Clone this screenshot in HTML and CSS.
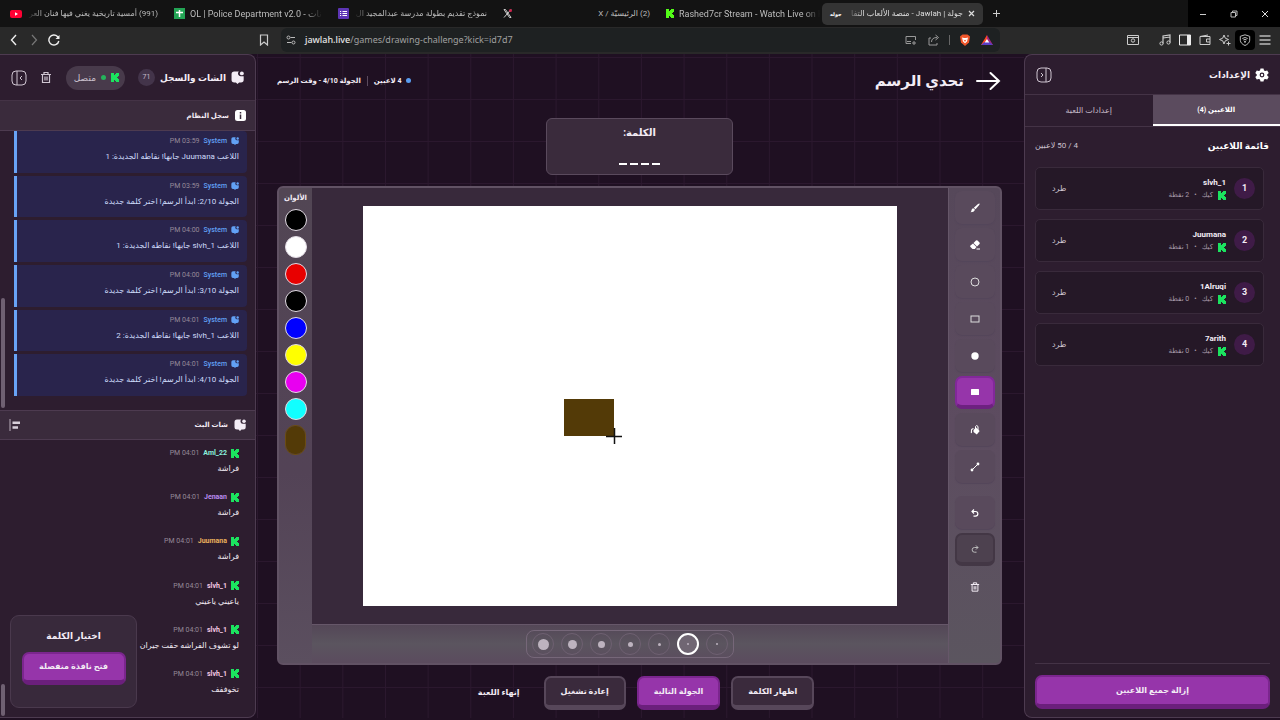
FILE: index.html
```html
<!DOCTYPE html>
<html lang="ar" dir="rtl">
<head>
<meta charset="utf-8">
<title>جولة | Jawlah - منصة الألعاب التفاعلية</title>
<link rel="stylesheet" href="styles.css">
</head>
<body>

<!-- shared icons -->
<svg class="defs" width="0" height="0">
	<symbol id="kick" viewBox="0 0 8 9"><path fill="currentColor" d="M0 0h3v2h1V1h1V0h3v3H7v1H6v1h1v1h1v3H5V8H4V7H3v2H0z"/></symbol>
	<symbol id="chat" viewBox="0 0 12 12"><path fill="currentColor" d="M3 .5h4.200A2.500 2.500 0 0 0 9 4.800h2.700V8a2.500 2.500 0 0 1-2.500 2.500H7.500L6 12l-1.500-1.500H3A2.500 2.500 0 0 1 .5 8V3A2.500 2.500 0 0 1 3 .5z"/><circle fill="currentColor" cx="10" cy="2.200" r="1.800"/></symbol>
	<symbol id="trash" viewBox="0 0 12 12"><path fill="none" stroke="currentColor" stroke-width="1.200" d="M1 3h10M4 3V1h4v2M2.500 3v8h7V3M5 5v4M7 5v4"/></symbol>
	<symbol id="panel" viewBox="0 0 16 16"><rect x="1" y="1" width="14" height="14" rx="4" fill="none" stroke="currentColor"/><path fill="none" stroke="currentColor" d="M6 1v14M11 6L9 8l2 2"/></symbol>
</svg>

<div class="browser" dir="ltr">
	<div class="tabs">
		<div class="tab tab1">
			<svg width="12" height="12" viewBox="0 0 12 12"><rect x="0" y="2" width="12" height="8" rx="2" fill="#f03"/><path d="M5 4.200v3.600L8 6z" fill="#fff"/></svg>
			<span class="tabtext fade-l" dir="rtl">(991) أمسية تاريخية يغني فيها فنان العر</span>
		</div>
		<div class="tab tab2">
			<svg width="11" height="11" viewBox="0 0 11 11"><rect width="11" height="11" fill="#23a455"/><path d="M5.500 2v7M2 4.500h7" stroke="#fff" stroke-width="1.500"/></svg>
			<span class="tabtext fade-r">OL | Police Department v2.0 - بيانات</span>
		</div>
		<div class="tab tab3">
			<svg width="11" height="11" viewBox="0 0 11 11"><rect width="11" height="11" rx="1" fill="#5d35b5"/><path d="M4.500 3.500H9M4.500 5.500H9M4.500 7.500H9M2 3.500h1.200M2 5.500h1.200M2 7.500h1.200" stroke="#fff"/></svg>
			<span class="tabtext fade-l" dir="rtl">نموذج تقديم بطولة مدرسة عبدالمجيد ال</span>
		</div>
		<div class="tab tab4">
			<svg width="9" height="9" viewBox="0 0 9 9"><path d="M1 .5h1.500l5.500 8H6.500zM8 .5L1 8.500" fill="none" stroke="#ccc"/><circle cx="7.500" cy="1.500" r="1.500" fill="#d1264f"/></svg>
			<span class="tabtext" dir="rtl">(2) الرئيسيّة / X</span>
		</div>
		<div class="tab tab5">
			<svg class="limekick" width="8" height="9"><use href="#kick"/></svg>
			<span class="tabtext fade-r">Rashed7cr Stream - Watch Live on Ki</span>
		</div>
		<div class="tab tab6 current">
			<b class="fav">جوله</b>
			<span class="tabtext fade-l" dir="rtl">جولة | Jawlah - منصة الألعاب التفا</span>
			<svg width="7" height="7" viewBox="0 0 7 7"><path d="M1 1l5 5M6 1L1 6" stroke="#ddd" stroke-width="1.200"/></svg>
		</div>
		<svg class="plus" width="9" height="9" viewBox="0 0 9 9"><path d="M4.500 1v7M1 4.500h7" stroke="#ccc"/></svg>
		<div class="wincontrols">
			<svg width="8" height="8" viewBox="0 0 8 8"><path d="M1 4.500h6" stroke="#ccc"/></svg>
			<svg width="8" height="8" viewBox="0 0 8 8"><path d="M2.500 2.500V1h4.500v4.500H5.500M1 2.500h4.500V7H1z" fill="none" stroke="#bbb"/></svg>
			<svg width="8" height="8" viewBox="0 0 8 8"><path d="M1 1l6 6M7 1L1 7" stroke="#ddd"/></svg>
		</div>
	</div>
	<div class="toolbar">
		<div class="nav">
			<svg width="12" height="12" viewBox="0 0 12 12"><path d="M8 1L3.500 6 8 11" fill="none" stroke="#eee" stroke-width="1.400"/></svg>
			<svg width="12" height="12" viewBox="0 0 12 12"><path d="M4 1l4.500 5L4 11" fill="none" stroke="#777" stroke-width="1.200"/></svg>
			<svg width="12" height="12" viewBox="0 0 12 12"><path d="M10.800 7A5 5 0 1 1 9.500 2.500l1.300 1.300" fill="none" stroke="#eee" stroke-width="1.400"/><path d="M11.500 1v4h-4z" fill="#eee"/></svg>
		</div>
		<svg class="bookmark" width="10" height="12" viewBox="0 0 10 12"><path d="M1.500 1h7v10L5 8l-3.500 3z" fill="none" stroke="#ccc" stroke-width="1.200"/></svg>
		<div class="url">
			<svg width="10" height="10" viewBox="0 0 10 10"><path d="M4.500 2.500H9M1 7.500h4.500" stroke="#bbb"/><circle cx="2.500" cy="2.500" r="1.500" fill="none" stroke="#bbb"/><circle cx="7.500" cy="7.500" r="1.500" fill="none" stroke="#bbb"/></svg>
			<span class="address"><b>jawlah.live</b>/games/drawing-challenge?kick=id7d7</span>
			<svg width="12" height="12" viewBox="0 0 12 12"><path d="M6 9.500H1v-7h9.500V6M2 7.500h4M9 7v4M7 9h4" fill="none" stroke="#999"/></svg>
			<svg width="12" height="12" viewBox="0 0 12 12"><path d="M3 4H1v7h8V9M3.500 8c0-3 2-4.500 5.500-4.500M7.500 1L10.500 3.500 7.500 6" fill="none" stroke="#999"/></svg>
			<i class="sep"></i>
			<svg width="12" height="12" viewBox="0 0 12 12"><path d="M3.500.500h5L11 2.500l-1 6L6 12 2 8.500 1 2.500z" fill="#f0562a"/><path d="M3 3.500l2 .5h2l2-.5-1 4-2 1.700L4 7.500z" fill="#fff"/><path d="M4.500 5.500l1.500.8 1.500-.8L6 8z" fill="#f0562a"/></svg>
			<svg width="14" height="12" viewBox="0 0 14 12"><path d="M7 1L1 11h6z" fill="#ff4724"/><path d="M7 1l6 10H7z" fill="#a0267e"/><path d="M1 11h12l-3.500-3h-5z" fill="#5a3dc4"/><path d="M7 5L4.700 8.500h4.600z" fill="#fff"/></svg>
		</div>
		<div class="tools">
			<svg width="12" height="12" viewBox="0 0 12 12"><path d="M.5 1.500h11v9H.5zM.5 3.500h11" fill="none" stroke="#ccc"/><circle cx="6" cy="6.500" r="1.700" fill="none" stroke="#ccc"/></svg>
			<svg class="music" width="12" height="12" viewBox="0 0 12 12"><path d="M4 9.500V2l7-1v7.500M4 4l7-1" fill="none" stroke="#ccc" stroke-width="1.200"/><circle cx="2.500" cy="9.500" r="1.600" fill="none" stroke="#ccc"/><circle cx="9.500" cy="8.500" r="1.600" fill="none" stroke="#ccc"/></svg>
			<svg width="12" height="12" viewBox="0 0 12 12"><path d="M.5 1h11v10H.5z" fill="none" stroke="#eee"/><path d="M8 1h3.500v10H8z" fill="#eee"/></svg>
			<svg width="12" height="12" viewBox="0 0 12 12"><path d="M1 2.500h10v8H1zM1 2.500L9 1M11 5H7.500v3H11" fill="none" stroke="#ccc"/></svg>
			<svg width="12" height="12" viewBox="0 0 12 12"><path d="M5 1l1.300 3.200L9.500 5.500 6.300 6.800 5 10 3.700 6.800.5 5.500l3.200-1.300zM9.500 7.500v4M7.500 9.500h4M9 1v2" fill="none" stroke="#ccc"/></svg>
			<span class="vpn"><svg width="12" height="12" viewBox="0 0 12 12"><path d="M6 .8l4.700 1.500v4C10.700 8.500 8.500 10.500 6 11.500 3.500 10.500 1.300 8.500 1.300 6.300v-4z" fill="none" stroke="#bbb"/><path d="M3.300 4.500q2.700-2 5.400 0M4.300 6q1.700-1.200 3.400 0" fill="none" stroke="#bbb"/><circle cx="6" cy="7.800" r="1" fill="#bbb"/></svg></span>
			<svg width="12" height="12" viewBox="0 0 12 12"><path d="M.5 2h11M.5 6h11M.5 10h11" stroke="#bbb" stroke-width="1.300"/></svg>
		</div>
	</div>
</div>

<div class="app">

	<aside class="panel settings">
		<header class="phead">
			<svg width="14" height="14" viewBox="0 0 14 14"><path fill="#fff" fill-rule="evenodd" d="M5.500.5h3l.5 2 1.200.6 2-.7 1.500 2.600-1.500 1.400v1.200l1.500 1.400-1.500 2.600-2-.7-1.200.6-.5 2h-3l-.5-2-1.200-.6-2 .7L.3 9l1.500-1.400V6.400L.3 5l1.500-2.600 2 .7L5 2.500zM7 4.600a2.400 2.400 0 1 0 0 4.800 2.400 2.400 0 0 0 0-4.800z"/><circle cx="7" cy="7" r="1.200" fill="#fff"/></svg>
			<h2>الإعدادات</h2>
			<button class="icon end flip" aria-label="إخفاء الإعدادات"><svg width="16" height="16"><use href="#panel"/></svg></button>
		</header>
		<nav class="ptabs">
			<button class="on">اللاعبين (4)</button>
			<button>إعدادات اللعبة</button>
		</nav>
		<div class="players">
			<div class="listhead"><h3>قائمة اللاعبين</h3><span>4 / 50 لاعبين</span></div>
			<div class="player">
				<span class="rank">1</span>
				<div><b>slvh_1</b><small><svg class="k" width="8" height="9"><use href="#kick"/></svg>كيك <i>•</i> 2 نقطة</small></div>
				<button>طرد</button>
			</div>
			<div class="player">
				<span class="rank">2</span>
				<div><b>Juumana</b><small><svg class="k" width="8" height="9"><use href="#kick"/></svg>كيك <i>•</i> 1 نقطة</small></div>
				<button>طرد</button>
			</div>
			<div class="player">
				<span class="rank">3</span>
				<div><b>1Alruqi</b><small><svg class="k" width="8" height="9"><use href="#kick"/></svg>كيك <i>•</i> 0 نقطة</small></div>
				<button>طرد</button>
			</div>
			<div class="player">
				<span class="rank">4</span>
				<div><b>7arith</b><small><svg class="k" width="8" height="9"><use href="#kick"/></svg>كيك <i>•</i> 0 نقطة</small></div>
				<button>طرد</button>
			</div>
		</div>
		<footer class="pfoot"><button class="btn purple">إزالة جميع اللاعبين</button></footer>
	</aside>

	<main class="game">
		<header class="ghead">
			<a href="#" aria-label="رجوع"><svg width="26" height="20" viewBox="0 0 26 20"><path d="M1 10h22M14.500 2l8.500 8-8.500 8" fill="none" stroke="#fff" stroke-width="2" stroke-linecap="round"/></svg></a>
			<h1>تحدي الرسم</h1>
			<div class="status"><i class="dot"></i><span>4 لاعبين</span><i class="bar"></i><span>الجولة 4/10 - وقت الرسم</span></div>
		</header>

		<div class="word"><span>الكلمة:</span><div class="blanks"><i></i><i></i><i></i><i></i></div></div>

		<div class="board">
			<div class="toolcol">
				<button aria-label="فرشاة"><svg width="10" height="10" viewBox="0 0 10 10"><path d="M9.500.500Q10 1 9 2.300L5.500 6.300 3.800 4.700 8 1Q9 .2 9.500.500zM3.300 5.200L5 6.800Q4 9.300.5 9.300 1.600 8.500 1.500 7 2 5.500 3.300 5.200z" fill="#fff"/></svg></button>
				<button aria-label="ممحاة"><svg width="10" height="10" viewBox="0 0 10 10"><path d="M6 .5q.8-.6 1.500 0L9.500 2.500q.6.8 0 1.500L7 6.500 3.500 3zM3 3.500L6.500 7 4.800 9H2.500L.5 7q-.6-.8 0-1.500zM6.500 8.500H10v1H6.500z" fill="#fff"/></svg></button>
				<button aria-label="دائرة"><svg width="10" height="10" viewBox="0 0 10 10"><circle cx="5" cy="5" r="4" fill="none" stroke="#ddd"/></svg></button>
				<button aria-label="مستطيل"><svg width="10" height="10" viewBox="0 0 10 10"><rect x="1" y="2" width="8" height="6" fill="none" stroke="#ddd"/></svg></button>
				<button aria-label="دائرة ممتلئة"><svg width="10" height="10" viewBox="0 0 10 10"><circle cx="5" cy="5" r="3.700" fill="#fff"/></svg></button>
				<button class="sel" aria-label="مستطيل ممتلئ"><svg width="10" height="10" viewBox="0 0 10 10"><rect x="1" y="2" width="8" height="6" rx=".5" fill="#fff"/></svg></button>
				<button aria-label="تعبئة"><svg width="10" height="10" viewBox="0 0 10 10"><path d="M3.500 5L6 2.500 9.700 6 6.800 9.500 3.500 7zM1 4.500q1.500-2 3-1L2 5v2.500Q1.500 8.500.8 8z" fill="#fff"/><path d="M5.500 4V1.500Q6.500-.5 8 1.500V5" fill="none" stroke="#fff"/></svg></button>
				<button aria-label="خط"><svg width="10" height="10" viewBox="0 0 10 10"><path d="M2 8l6-6" stroke="#fff"/><circle cx="2" cy="8" r="1.400" fill="#fff"/><circle cx="8" cy="2" r="1.400" fill="#fff"/></svg></button>
				<button class="split" aria-label="تراجع"><svg width="10" height="10" viewBox="0 0 10 10"><path d="M4 1.500L2 3.500l2 2M2 3.500h3.500a2.300 2.300 0 0 1 0 4.700H3.500" fill="none" stroke="#fff" stroke-width="1.200"/></svg></button>
				<button class="off" disabled aria-label="إعادة"><svg width="10" height="10" viewBox="0 0 10 10"><path d="M6 1.500l2 2-2 2M8 3.500H4.500a2.300 2.300 0 0 0 0 4.700H6.500" fill="none" stroke="#bbb"/></svg></button>
				<button class="bare" aria-label="مسح"><svg width="10" height="12"><use href="#trash"/></svg></button>
			</div>
			<div class="stage">
				<div class="paper">
					<svg class="canvas" viewBox="0 0 534 400">
						<rect width="534" height="400" fill="#fff"/>
						<rect x="201" y="193" width="50" height="37" fill="#533a07"/>
						<path d="M251.500 222v16M243 230.500h16" stroke="#111" stroke-width="1.500"/>
					</svg>
				</div>
				<div class="sizes">
					<div class="sizebox">
						<button aria-label="1"><i class="s1"></i></button>
						<button class="sel" aria-label="2"><i class="s1"></i></button>
						<button aria-label="3"><i class="s2"></i></button>
						<button aria-label="4"><i class="s3"></i></button>
						<button aria-label="5"><i class="s4"></i></button>
						<button aria-label="6"><i class="s5"></i></button>
						<button aria-label="7"><i class="s6"></i></button>
					</div>
				</div>
			</div>
			<div class="colors">
				<label for="custom">الألوان</label>
				<button class="c-black" aria-label="أسود"></button>
				<button class="c-white" aria-label="أبيض"></button>
				<button class="c-red" aria-label="أحمر"></button>
				<button class="c-black" aria-label="أخضر"></button>
				<button class="c-blue" aria-label="أزرق"></button>
				<button class="c-yellow" aria-label="أصفر"></button>
				<button class="c-pink" aria-label="وردي"></button>
				<button class="c-cyan" aria-label="سماوي"></button>
				<input type="color" id="custom" value="#533a07">
			</div>
		</div>

		<div class="actions">
			<button class="btn grey">اظهار الكلمة</button>
			<button class="btn purple">الجولة التالية</button>
			<button class="btn grey">إعادة تشغيل</button>
			<button class="plain">إنهاء اللعبة</button>
		</div>
	</main>

	<aside class="panel chat">
		<header class="phead tall">
			<svg width="13" height="13"><use href="#chat"/></svg>
			<h2>الشات والسجل</h2>
			<span class="count">71</span>
			<span class="online"><svg class="k" width="8" height="9"><use href="#kick"/></svg><i></i>متصل</span>
			<button class="icon" aria-label="مسح السجل"><svg width="12" height="13"><use href="#trash"/></svg></button>
			<button class="icon end" aria-label="إخفاء الشات"><svg width="16" height="16"><use href="#panel"/></svg></button>
		</header>
		<div class="shead"><svg width="11" height="11" viewBox="0 0 11 11"><rect width="11" height="11" rx="2.500" fill="#fff"/><path d="M5.500 2v1.500M5.500 4.500V9" stroke="#3a2b3b" stroke-width="1.500"/></svg><h3>سجل النظام</h3></div>
		<div class="log">
			<div class="entry"><p class="meta"><svg width="8" height="8"><use href="#chat"/></svg><b>System</b><time>03:59 PM</time></p><p>اللاعب Juumana جابها! نقاطه الجديدة: 1</p></div>
			<div class="entry"><p class="meta"><svg width="8" height="8"><use href="#chat"/></svg><b>System</b><time>03:59 PM</time></p><p>الجولة 2/10: ابدأ الرسم! اختر كلمة جديدة</p></div>
			<div class="entry"><p class="meta"><svg width="8" height="8"><use href="#chat"/></svg><b>System</b><time>04:00 PM</time></p><p>اللاعب slvh_1 جابها! نقاطه الجديدة: 1</p></div>
			<div class="entry"><p class="meta"><svg width="8" height="8"><use href="#chat"/></svg><b>System</b><time>04:00 PM</time></p><p>الجولة 3/10: ابدأ الرسم! اختر كلمة جديدة</p></div>
			<div class="entry"><p class="meta"><svg width="8" height="8"><use href="#chat"/></svg><b>System</b><time>04:01 PM</time></p><p>اللاعب slvh_1 جابها! نقاطه الجديدة: 2</p></div>
			<div class="entry"><p class="meta"><svg width="8" height="8"><use href="#chat"/></svg><b>System</b><time>04:01 PM</time></p><p>الجولة 4/10: ابدأ الرسم! اختر كلمة جديدة</p></div>
			<i class="thumb mid"></i>
		</div>
		<div class="shead"><svg width="12" height="12"><use href="#chat"/></svg><h3>شات البث</h3>
			<button class="icon end" aria-label="محاذاة"><svg width="12" height="12" viewBox="0 0 12 12"><path d="M1 0v12" stroke="#b9aebb"/><path d="M3.500 3.700H11M3.500 8.500H9" stroke="#d8cfda" stroke-width="2.500"/></svg></button>
		</div>
		<div class="stream">
			<div class="msg"><p class="meta"><svg class="k" width="8" height="9"><use href="#kick"/></svg><b class="mint">Aml_22</b><time>04:01 PM</time></p><p>فراشة</p></div>
			<div class="msg"><p class="meta"><svg class="k" width="8" height="9"><use href="#kick"/></svg><b class="lilac">Jenaan</b><time>04:01 PM</time></p><p>فراشة</p></div>
			<div class="msg"><p class="meta"><svg class="k" width="8" height="9"><use href="#kick"/></svg><b class="gold">Juumana</b><time>04:01 PM</time></p><p>فراشة</p></div>
			<div class="msg"><p class="meta"><svg class="k" width="8" height="9"><use href="#kick"/></svg><b class="rose">slvh_1</b><time>04:01 PM</time></p><p>ياعيني ياعيني</p></div>
			<div class="msg"><p class="meta"><svg class="k" width="8" height="9"><use href="#kick"/></svg><b class="rose">slvh_1</b><time>04:01 PM</time></p><p>لو تشوف الفراشه حقت جيران</p></div>
			<div class="msg"><p class="meta"><svg class="k" width="8" height="9"><use href="#kick"/></svg><b class="rose">slvh_1</b><time>04:01 PM</time></p><p>تخوففف</p></div>
			<i class="thumb low"></i>
		</div>
		<div class="picker"><h3>اختيار الكلمة</h3><button class="btn purple">فتح نافذة منفصلة</button></div>
	</aside>

</div>
</body>
</html>
```
FILE: styles.css
```css
* { box-sizing: border-box; }
body {
	margin: 0;
	height: 100vh;
	display: flex;
	flex-direction: column;
	overflow: hidden;
	background: #1f1022;
	color: #f3ecf5;
	font-family: Roboto, "DejaVu Sans", sans-serif;
	font-size: 8px;
	line-height: 12px;
}
h1, h2, h3, p { margin: 0; }
button { font: inherit; color: inherit; background: none; border: 0; padding: 0; }
svg { flex: none; display: block; }
.defs { position: absolute; }
i { font-style: normal; }
.k { color: #1be35f; }

/* browser window */
.browser { background: #131313; color: #bdbdbd; }
.tabs { display: flex; align-items: center; height: 27px; font-size: 9px; }
.tab { display: flex; align-items: center; gap: 5px; padding: 0 6px 0 10px; height: 22px; white-space: nowrap; }
.tabtext { flex: 1; min-width: 0; }
.tabtext[dir=rtl] { font-size: 8px; }
.fade-l { mask-image: linear-gradient(to right, transparent, #000 16px); }
.fade-r { mask-image: linear-gradient(to left, transparent, #000 16px); }
.tab1 { width: 164px; }
.tab2 { width: 164px; }
.tab3 { width: 165px; }
.tab4 { width: 163px; }
.tab5 { width: 166px; padding-right: 2px; }
.tab6 { width: 161px; padding: 0 8px; }
.current { background: #343434; color: #ddd; border-radius: 5px; }
.fav { font-size: 5px; color: #fff; }
.limekick { color: #53fc18; }
.plus { margin-left: 9px; }
.wincontrols {
	display: flex;
	justify-content: space-around;
	align-items: center;
	width: 92px;
	height: 27px;
	margin-left: auto;
	background: #000;
}
.toolbar { display: flex; align-items: center; height: 27px; padding-bottom: 1px; background: #292929; }
.nav { display: flex; gap: 8px; padding-left: 8px; width: 259px; }
.url {
	flex: 1;
	display: flex;
	align-items: center;
	gap: 9px;
	height: 24px;
	margin-left: 12px;
	padding: 0 6px 0 5px;
	border-radius: 6px;
	background: #1e2122;
	font-family: "Noto Sans", sans-serif;
	font-size: 9px;
	color: #a0a0a0;
}
.url svg:nth-of-type(2) { margin-right: 2px; }
.address { flex: 1; }
.address b { color: #e6e6e6; font-weight: 500; }
.sep { width: 1px; height: 10px; background: #666; }
.tools { display: flex; align-items: center; gap: 8px; margin-left: 127px; padding-right: 9px; }
.music { margin-left: 12px; }
.vpn { background: #000; padding: 4px; margin: 0 -4px; border-radius: 4px; }

/* layout */
.app {
	flex: 1;
	min-height: 0;
	display: grid;
	grid-template-columns: 256px 1fr 256px;
	grid-template-rows: minmax(0, 1fr);
	padding-bottom: 2px;
}
.panel {
	display: flex;
	flex-direction: column;
	min-height: 0;
	background: #2d1d2f;
	border: 1px solid #4d3b50;
}
.settings { border-right: 0; border-radius: 8px 0 0 8px; }
.chat { position: relative; border-left: 0; border-radius: 0 8px 8px 0; }
.phead {
	display: flex;
	align-items: center;
	gap: 5px;
	height: 40px;
	padding: 0 11px;
	border-bottom: 1px solid #443346;
}
.phead h2 { font-size: 9px; line-height: 16px; }
.icon { color: #cfc5d1; }
.end { margin-right: auto; }
.flip { transform: scaleX(-1); }

/* settings panel */
.ptabs { display: grid; grid-template-columns: 1fr 1fr; height: 32px; border-bottom: 1px solid #443346; color: #c5bac8; }
.ptabs .on { background: #5b4b5e; border-bottom: 2px solid #fff; color: #fff; font-weight: bold; font-size: 7px; }
.players { flex: 1; padding: 11px 10px; display: flex; flex-direction: column; gap: 9px; }
.listhead { display: flex; justify-content: space-between; align-items: center; height: 16px; margin: 0 1px 4px 0; color: #cbc1ce; }
.listhead h3 { font-size: 9px; color: #fff; }
.player {
	display: flex;
	align-items: center;
	gap: 8px;
	height: 43px;
	margin-right: 6px;
	padding: 0 8px 0 16px;
	border: 1px solid #392a3b;
	border-radius: 5px;
	background: #251827;
}
.rank {
	width: 21px;
	height: 21px;
	line-height: 21px;
	border-radius: 50%;
	background: #3f1b47;
	text-align: center;
	font-size: 9px;
	font-weight: bold;
}
.player div { flex: 1; }
.player b, .player small { display: flex; align-items: center; }
.player b { line-height: 13px; }
.player small { gap: 5px; font-size: 7px; line-height: 13px; color: #a79ba9; }
.player button { color: #cfc5d1; }
.pfoot { display: flex; margin: 0 10px; padding: 11px 0 8px; border-top: 1px solid #443346; }
.pfoot .btn { flex: 1; }

.btn {
	height: 34px;
	padding: 0 15px;
	border: 2px solid;
	border-bottom-width: 5px;
	border-radius: 7px;
	font-weight: bold;
	white-space: nowrap;
}
.purple { background: #9635aa; border-color: #7b268e; border-bottom-color: #6b1f7c; }
.grey { background: #3a2a3c; border-color: #57475a; }

/* game */
.game {
	display: flex;
	flex-direction: column;
	align-items: center;
	padding: 0 22px 8px 21px;
	background-color: #1f1022;
	background-image: linear-gradient(to right, #2b182e 1px, transparent 1px), linear-gradient(#2b182e 1px, transparent 1px);
	background-size: calc(100% / 18) 42px;
	background-position: 1px 3px;
}
.ghead { align-self: stretch; display: flex; align-items: center; gap: 12px; height: 53px; }
.ghead h1 { font-size: 15px; line-height: 24px; }
.status { display: flex; align-items: center; gap: 4px; margin-right: auto; font-weight: bold; font-size: 7px; }
.dot { width: 5px; height: 5px; border-radius: 50%; background: #5a9df0; }
.bar { width: 1px; height: 10px; background: #5b4b5e; margin: 0 2px; }
.word {
	display: flex;
	flex-direction: column;
	align-items: center;
	justify-content: space-between;
	width: 187px;
	height: 57px;
	margin: 11px 0;
	padding: 6px 0 9px;
	border: 1px solid #5a4a5d;
	border-radius: 6px;
	background: #3a2b3c;
	font-size: 10px;
	line-height: 16px;
	font-weight: bold;
}
.blanks { display: flex; gap: 3px; }
.blanks i { width: 8px; height: 2px; background: #fff; }

.board {
	align-self: stretch;
	flex: 1;
	min-height: 0;
	display: grid;
	grid-template-columns: 52px 1fr 33px;
	grid-template-rows: minmax(0, 1fr);
	border: 2px solid #615264;
	border-radius: 6px;
	background: #5b4c5f;
	overflow: hidden;
}
.toolcol {
	display: flex;
	flex-direction: column;
	align-items: center;
	gap: 4px;
	padding-top: 3px;
	border-left: 1px solid #665769;
	background: linear-gradient(#56485a, #5d4c60 50%, #5b555f);
}
.toolcol button {
	display: grid;
	place-items: center;
	flex: none;
	width: 40px;
	height: 33px;
	border-radius: 7px;
	background: #594a5c;
	box-shadow: 0 1px 1px #54465a;
}
.toolcol .sel { background: #9635aa; border: 2px solid #82289a; border-bottom: 4px solid #6d2180; box-shadow: none; }
.toolcol .split { margin-top: 9px; }
.toolcol .off { background: #4d414f; border: 2px solid #433745; border-bottom-width: 4px; box-shadow: none; }
.toolcol .bare { background: none; box-shadow: none; }
.stage { display: flex; flex-direction: column; min-width: 0; min-height: 0; }
.paper { flex: 1; min-height: 0; padding: 18px; background: #38293b; display: flex; justify-content: center; }
.canvas { height: 100%; max-width: 100%; }
.sizes { display: flex; align-items: center; justify-content: center; height: 39px; border-top: 1px solid #665769; background: linear-gradient(#544757, #5b555f 50%, #5b4b5e); }
.sizebox { display: flex; gap: 7px; padding: 2px 5px; border: 1px solid #766779; border-radius: 8px; }
.sizebox button { display: grid; place-items: center; width: 22px; height: 22px; border-radius: 50%; border: 1px solid #6e6071; }
.sizebox .sel { border: 2px solid #fff; background: #706673; }
.sizebox i { border-radius: 50%; background: #bdb3bf; }
.s1 { width: 2px; height: 2px; }
.s2 { width: 3px; height: 3px; }
.s3 { width: 5px; height: 5px; }
.s4 { width: 7px; height: 7px; }
.s5 { width: 9px; height: 9px; }
.s6 { width: 11px; height: 11px; }
.colors {
	display: flex;
	flex-direction: column;
	align-items: center;
	gap: 5px;
	padding-top: 5px;
	background: linear-gradient(#524654, #534356 60%, #5b4f5f);
}
.colors label { font-size: 7px; font-weight: bold; line-height: 11px; }
.colors button { width: 22px; height: 22px; border-radius: 50%; border: 1px solid #e2dbe4; }
.colors .c-black { background: #000; }
.colors .c-white { background: #fff; }
.colors .c-red { background: #e80000; }
.colors .c-blue { background: #00f; }
.colors .c-yellow { background: #ff0; }
.colors .c-pink { background: #e800f0; }
.colors .c-cyan { background: #1ff; }
.colors input { appearance: none; width: 21px; height: 30px; padding: 0; border: 1px solid #6b4c12; border-radius: 10px; background: none; overflow: hidden; }
.colors input::-webkit-color-swatch-wrapper { padding: 0; }
.colors input::-webkit-color-swatch { border: 0; }

.actions { display: flex; align-items: center; gap: 11px; margin-top: 11px; }
.plain { font-weight: bold; padding: 0 13px; }

/* chat panel */
.tall { height: 46px; }
.count { width: 17px; height: 17px; line-height: 17px; border-radius: 50%; background: #43344a; text-align: center; font-size: 7px; color: #c5bac8; }
.online { display: flex; align-items: center; gap: 5px; height: 24px; padding: 0 6px 0 8px; margin: 0 8px 0 9px; border-radius: 12px; background: #483a4b; color: #cbc1ce; font-size: 9px; }
.online i { width: 5px; height: 5px; border-radius: 50%; background: #25b35b; }
.shead { display: flex; align-items: center; gap: 6px; height: 30px; padding: 0 9px; background: #3a2b3c; border-bottom: 1px solid #4d3b50; }
.log + .shead { border-top: 1px solid #4d3b50; }
.shead h3 { font-size: 7px; }
.log { position: relative; flex: 1; min-height: 0; display: flex; flex-direction: column; gap: 3px; padding: 0 8px 14px 14px; }
.entry { flex: 1; min-height: 0; padding: 4px 8px; background: #29244c; border-left: 3px solid #68a3f5; border-radius: 0 4px 4px 0; color: #cfdcfb; }
.meta { display: flex; align-items: center; gap: 4px; margin-bottom: 4px; line-height: 12px; font-size: 7px; }
.meta time { color: #968a99; }
.entry .meta { color: #62a1f5; }
.entry .meta b { font-weight: 500; }
.stream { position: relative; flex: 1; min-height: 0; display: flex; flex-direction: column; padding: 3px 16px 9px; }
.msg { flex: 1; min-height: 0; padding-top: 4px; }
.mint { color: #8af0dc; }
.lilac { color: #b98bf0; }
.gold { color: #eab05c; }
.rose { color: #f3c6e2; }
.thumb { position: absolute; left: 1px; width: 4px; border-radius: 2px; background: #6f6072; }
.mid { bottom: 2px; height: 110px; }
.low { bottom: 1px; height: 32px; }
.picker {
	position: absolute;
	left: 10px;
	bottom: 9px;
	display: flex;
	flex-direction: column;
	align-items: center;
	gap: 8px;
	width: 127px;
	height: 93px;
	padding-top: 12px;
	border: 1px solid #4a394d;
	border-radius: 9px;
	background: #38293b;
}
.picker h3 { font-size: 9px; line-height: 16px; }
.picker .btn { width: 104px; height: 33px; padding: 0; }
```
